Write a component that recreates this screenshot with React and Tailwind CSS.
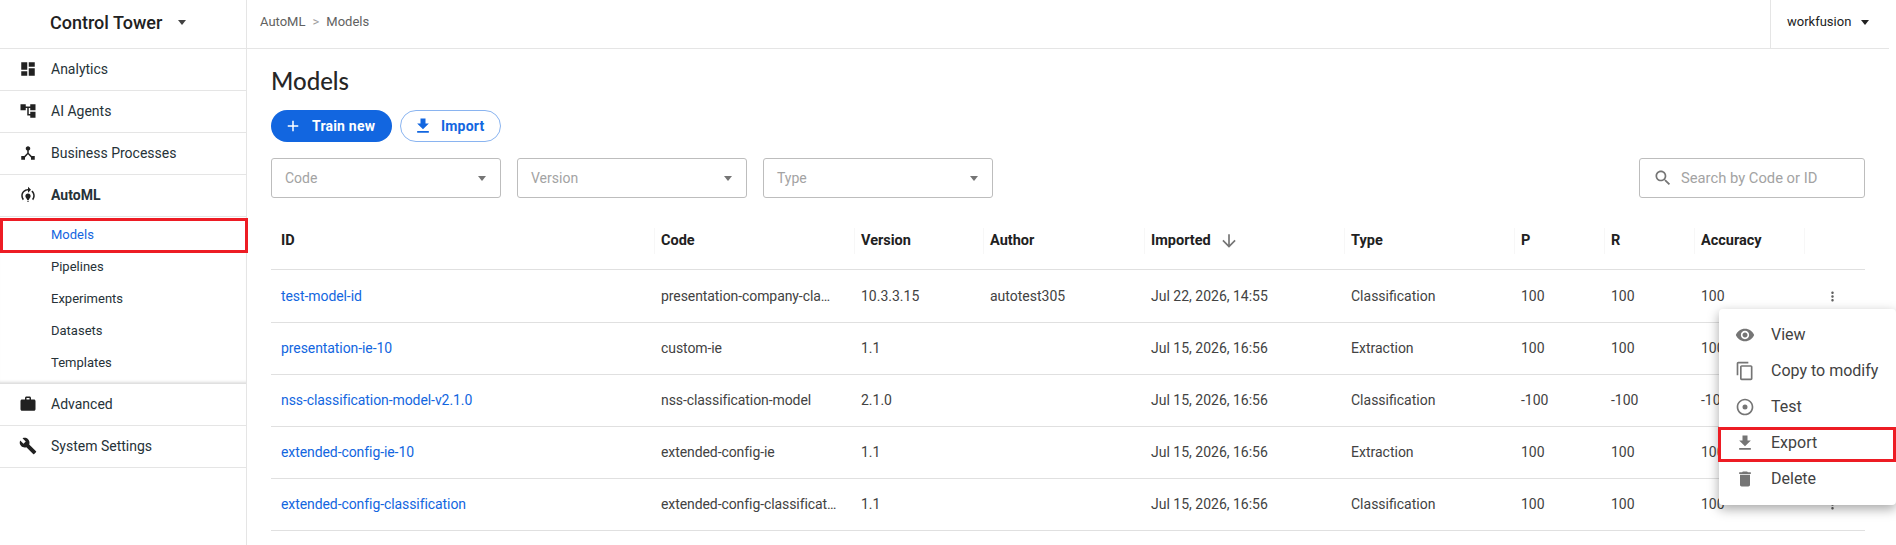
import React from "react";

const font = { fontFamily: "Roboto, sans-serif" };

const I = ({ d, size = 24, className = "", fill = "currentColor" }) => (
  <svg width={size} height={size} viewBox="0 0 24 24" fill={fill} className={className}>
    <path d={d} />
  </svg>
);

const ICONS = {
  dashboard: "M3 13h8V3H3v10zm0 8h8v-6H3v6zm10 0h8V11h-8v10zm0-18v6h8V3h-8z",
  tree: "M22 11V3h-7v3H9V3H2v8h7V8h2v10h4v3h7v-8h-7v3h-2V8h2v3h7z",
  hub: "M17 16l-4-4V8.82C14.16 8.4 15 7.3 15 6c0-1.66-1.34-3-3-3S9 4.34 9 6c0 1.3.84 2.4 2 2.82V12l-4 4H3v5h5v-3.05l4-4.2 4 4.2V21h5v-5h-4z",
  automl: "M15.5 13.5c0 2-2.5 3.5-2.5 5h-2c0-1.5-2.5-3-2.5-5 0-1.93 1.57-3.5 3.5-3.5s3.5 1.57 3.5 3.5zM13 19.5h-2V21h2v-1.5zM19 13c0 1.68-.59 3.21-1.58 4.42l1.42 1.42C20.18 17.27 21 15.23 21 13c0-2.74-1.23-5.19-3.16-6.84l-1.42 1.42C17.99 8.86 19 10.82 19 13zM16 5l-4-4v3c-4.97 0-9 4.03-9 9 0 2.23.82 4.27 2.16 5.84l1.42-1.42C5.59 16.21 5 14.68 5 13c0-3.86 3.14-7 7-7v3l4-4z",
  work: "M20 6h-4V4c0-1.11-.89-2-2-2h-4c-1.11 0-2 .89-2 2v2H4c-1.11 0-1.99.89-1.99 2L2 19c0 1.11.89 2 2 2h16c1.11 0 2-.89 2-2V8c0-1.11-.89-2-2-2zm-6 0h-4V4h4v2z",
  build: "M22.7 19l-9.1-9.1c.9-2.3.4-5-1.5-6.9-2-2-5-2.4-7.4-1.3L9 6 6 9 1.6 4.7C.4 7.1.9 10.1 2.9 12.1c1.9 1.9 4.6 2.4 6.9 1.5l9.1 9.1c.4.4 1 .4 1.4 0l2.3-2.3c.5-.4.5-1.1.1-1.4z",
  download: "M19 9h-4V3H9v6H5l7 7 7-7zM5 18v2h14v-2H5z",
  plus: "M19 13h-6v6h-2v-6H5v-2h6V5h2v6h6v2z",
  search: "M15.5 14h-.79l-.28-.27C15.41 12.59 16 11.11 16 9.5 16 5.91 13.09 3 9.5 3S3 5.91 3 9.5 5.91 16 9.5 16c1.61 0 3.09-.59 4.23-1.57l.27.28v.79l5 4.99L20.49 19l-4.99-5zm-6 0C7.01 14 5 11.99 5 9.5S7.01 5 9.5 5 14 7.01 14 9.5 11.99 14 9.5 14z",
  more: "M12 8c1.1 0 2-.9 2-2s-.9-2-2-2-2 .9-2 2 .9 2 2 2zm0 2c-1.1 0-2 .9-2 2s.9 2 2 2 2-.9 2-2-.9-2-2-2zm0 6c-1.1 0-2 .9-2 2s.9 2 2 2 2-.9 2-2-.9-2-2-2z",
  eye: "M12 4.5C7 4.5 2.73 7.61 1 12c1.73 4.39 6 7.5 11 7.5s9.27-3.11 11-7.5c-1.73-4.39-6-7.5-11-7.5zM12 17c-2.76 0-5-2.24-5-5s2.24-5 5-5 5 2.24 5 5-2.24 5-5 5zm0-8c-1.66 0-3 1.34-3 3s1.34 3 3 3 3-1.34 3-3-1.34-3-3-3z",
  copy: "M16 1H4c-1.1 0-2 .9-2 2v14h2V3h12V1zm3 4H8c-1.1 0-2 .9-2 2v14c0 1.1.9 2 2 2h11c1.1 0 2-.9 2-2V7c0-1.1-.9-2-2-2zm0 16H8V7h11v14z",
  test: "M12 9a3 3 0 1 0 0 6 3 3 0 0 0 0-6zm0-7C6.48 2 2 6.48 2 12s4.48 10 10 10 10-4.48 10-10S17.52 2 12 2zm0 18c-4.42 0-8-3.58-8-8s3.58-8 8-8 8 3.58 8 8-3.58 8-8 8z",
  trash: "M6 19c0 1.1.9 2 2 2h8c1.1 0 2-.9 2-2V7H6v12zM19 4h-3.5l-1-1h-5l-1 1H5v2h14V4z",
  arrowDown: "M20 12l-1.41-1.41L13 16.17V4h-2v12.17l-5.58-5.59L4 12l8 8 8-8z",
};

const Caret = ({ className = "" }) => (
  <span className={`inline-block w-0 h-0 border-l-[4px] border-r-[4px] border-t-[5px] border-l-transparent border-r-transparent ${className}`} />
);

const NavRow = ({ icon, label, bold }) => (
  <div className="h-[42px] pb-[1px] flex items-center border-b border-[#e5e5e5]">
    <span className="w-[51px] pl-[19px] flex shrink-0 text-[#212121]">
      <I d={ICONS[icon]} size={18} />
    </span>
    <span className={`text-[14px] text-[#263238] ${bold ? "font-bold" : ""}`}>{label}</span>
  </div>
);

const SubRow = ({ label, active }) => (
  <div className={`h-[32px] flex items-center pl-[51px] text-[13px] ${active ? "text-[#1565e0]" : "text-[#263238]"}`}>{label}</div>
);

const Select = ({ label, className = "" }) => (
  <div className={`w-[230px] h-[40px] border border-[#bdbdbd] rounded-[3px] flex items-center justify-between pl-[13px] pr-[14px] ${className}`}>
    <span className="text-[14px] text-[#a3a3a3]">{label}</span>
    <Caret className="border-t-[#757575]" />
  </div>
);

const cols = ["w-[380px]", "w-[200px]", "w-[129px]", "w-[161px]", "w-[200px]", "w-[170px]", "w-[90px]", "w-[90px]", "w-[110px]"];

const rows = [
  ["test-model-id", "presentation-company-cla…", "10.3.3.15", "autotest305", "Jul 22, 2026, 14:55", "Classification", "100", "100", "100"],
  ["presentation-ie-10", "custom-ie", "1.1", "", "Jul 15, 2026, 16:56", "Extraction", "100", "100", "100"],
  ["nss-classification-model-v2.1.0", "nss-classification-model", "2.1.0", "", "Jul 15, 2026, 16:56", "Classification", "-100", "-100", "-100"],
  ["extended-config-ie-10", "extended-config-ie", "1.1", "", "Jul 15, 2026, 16:56", "Extraction", "100", "100", "100"],
  ["extended-config-classification", "extended-config-classificat…", "1.1", "", "Jul 15, 2026, 16:56", "Classification", "100", "100", "100"],
];

const headers = ["ID", "Code", "Version", "Author", "Imported", "Type", "P", "R", "Accuracy"];

const menu = [
  ["View", "eye"],
  ["Copy to modify", "copy"],
  ["Test", "test"],
  ["Export", "download", true],
  ["Delete", "trash"],
];

const divider = "relative before:absolute before:left-[3px] before:-top-[3px] before:-bottom-[3px] before:w-px before:bg-[#f7f7f7]";

export default function App() {
  return (
    <div style={font} className="w-[1896px] h-[545px] overflow-hidden flex bg-white relative">
      <aside className="w-[247px] shrink-0 border-r border-[#e5e5e5] flex flex-col">
        <div className="h-[49px] shrink-0 pb-[4px] border-b border-[#e5e5e5] flex items-center pl-[50px]">
          <span className="text-[18px] font-medium text-[#212121]">Control Tower</span>
          <Caret className="ml-[16px] border-t-[#424242]" />
        </div>
        <NavRow icon="dashboard" label="Analytics" />
        <NavRow icon="tree" label="AI Agents" />
        <NavRow icon="hub" label="Business Processes" />
        <NavRow icon="automl" label="AutoML" bold />
        <div className="shadow-[inset_0_-4px_3px_-2px_rgba(0,0,0,0.14)] pt-[2px] h-[167px] flex flex-col">
          <div className="relative">
            <SubRow label="Models" active />
            <div className="absolute left-0 -right-[2px] -top-[1px] -bottom-[2px] border-[3px] border-[#ed1c24]" />
          </div>
          <SubRow label="Pipelines" />
          <SubRow label="Experiments" />
          <SubRow label="Datasets" />
          <SubRow label="Templates" />
        </div>
        <NavRow icon="work" label="Advanced" />
        <NavRow icon="build" label="System Settings" />
      </aside>

      <main className="flex-1 min-w-0 flex flex-col">
        <header className="h-[49px] shrink-0 mr-[7px] border-b border-[#e5e5e5] flex items-center">
          <div className="flex-1 pl-[13px] pb-[5px] text-[13px] text-[#616161] flex items-center gap-[7px]">
            <span>AutoML</span>
            <span className="text-[#9e9e9e]">&gt;</span>
            <span>Models</span>
          </div>
          <div className="h-full w-[119px] pb-[4px] border-l border-[#e5e5e5] flex items-center pl-[16px] text-[13px] text-[#212121]">
            workfusion
            <Caret className="ml-[10px] border-t-[#212121]" />
          </div>
        </header>

        <div className="pl-[24px] pr-[31px] flex flex-col">
          <h1 className="text-[24px] leading-[32px] font-medium text-[#262626] mt-[16px]" style={{ fontFamily: "Lato, sans-serif" }}>Models</h1>
          <div className="flex gap-[8px] mt-[13px]">
            <button className="h-[32px] w-[121px] rounded-full bg-[#1266e0] text-white text-[14px] tracking-[0.2px] font-bold flex items-center pl-[13px] gap-[10px]">
              <I d={ICONS.plus} size={18} />
              Train new
            </button>
            <button className="h-[32px] w-[101px] rounded-full border border-[#8ab4f0] text-[#1266e0] text-[14px] tracking-[0.2px] font-bold flex items-center pl-[12px] gap-[8px]">
              <I d={ICONS.download} size={20} />
              Import
            </button>
          </div>

          <div className="flex mt-[16px]">
            <Select label="Code" />
            <Select label="Version" className="ml-[16px]" />
            <Select label="Type" className="ml-[16px]" />
            <div className="ml-auto w-[226px] h-[40px] border border-[#bdbdbd] rounded-[3px] flex items-center pl-[13px] gap-[8px] text-[#757575]">
              <I d={ICONS.search} size={20} />
              <span className="text-[14.75px] text-[#a3a3a3]">Search by Code or ID</span>
            </div>
          </div>

          <div className="mt-[12px] w-[1594px]">
            <div className="h-[60px] pt-[2px] flex items-center border-b border-[#e0e0e0]">
              {headers.map((h, i) => (
                <div key={h} className={`${cols[i]} shrink-0 pl-[10px] text-[14.5px] font-bold text-[#212121] flex items-center h-[20px] ${i > 0 ? divider : ""}`}>
                  {h}
                  {h === "Imported" && <I d={ICONS.arrowDown} size={20} className="ml-[8px] text-[#757575]" />}
                </div>
              ))}
              <div className={`w-[65px] shrink-0 h-[20px] ${divider}`} />
            </div>
            {rows.map((r, ri) => (
              <div key={ri} className={`${ri === 0 ? "h-[53px]" : "h-[52px]"} flex items-center border-b border-[#e0e0e0]`}>
                {r.map((c, i) => (
                  <div key={i} className={`${cols[i]} shrink-0 pl-[10px] text-[14px] whitespace-nowrap ${i === 0 ? "text-[#1266e0] tracking-[-0.08px]" : i === 1 ? "text-[#424242] tracking-[-0.08px]" : "text-[#424242]"}`}>{c}</div>
                ))}
                <span className="w-[65px] shrink-0 pl-[24px] flex text-[#616161]">
                  <I d={ICONS.more} size={15} />
                </span>
              </div>
            ))}
          </div>
        </div>
      </main>

      <div className="absolute left-[1719px] top-[309px] w-[177px] h-[196px] bg-white rounded-[4px] shadow-[0_4px_12px_rgba(0,0,0,0.35)] py-[8px]">
        {menu.map(([label, icon, hl]) => (
          <div key={label} className="h-[36px] flex items-center relative pl-[16px]">
            <span className="w-[36px] text-[#757575] flex shrink-0"><I d={ICONS[icon]} size={20} /></span>
            <span className="text-[16px] text-[#424242] whitespace-nowrap">{label}</span>
            {hl && <div className="absolute -left-[1px] right-0 top-[2px] h-[35px] border-[3px] border-[#ed1c24]" />}
          </div>
        ))}
      </div>
    </div>
  );
}
